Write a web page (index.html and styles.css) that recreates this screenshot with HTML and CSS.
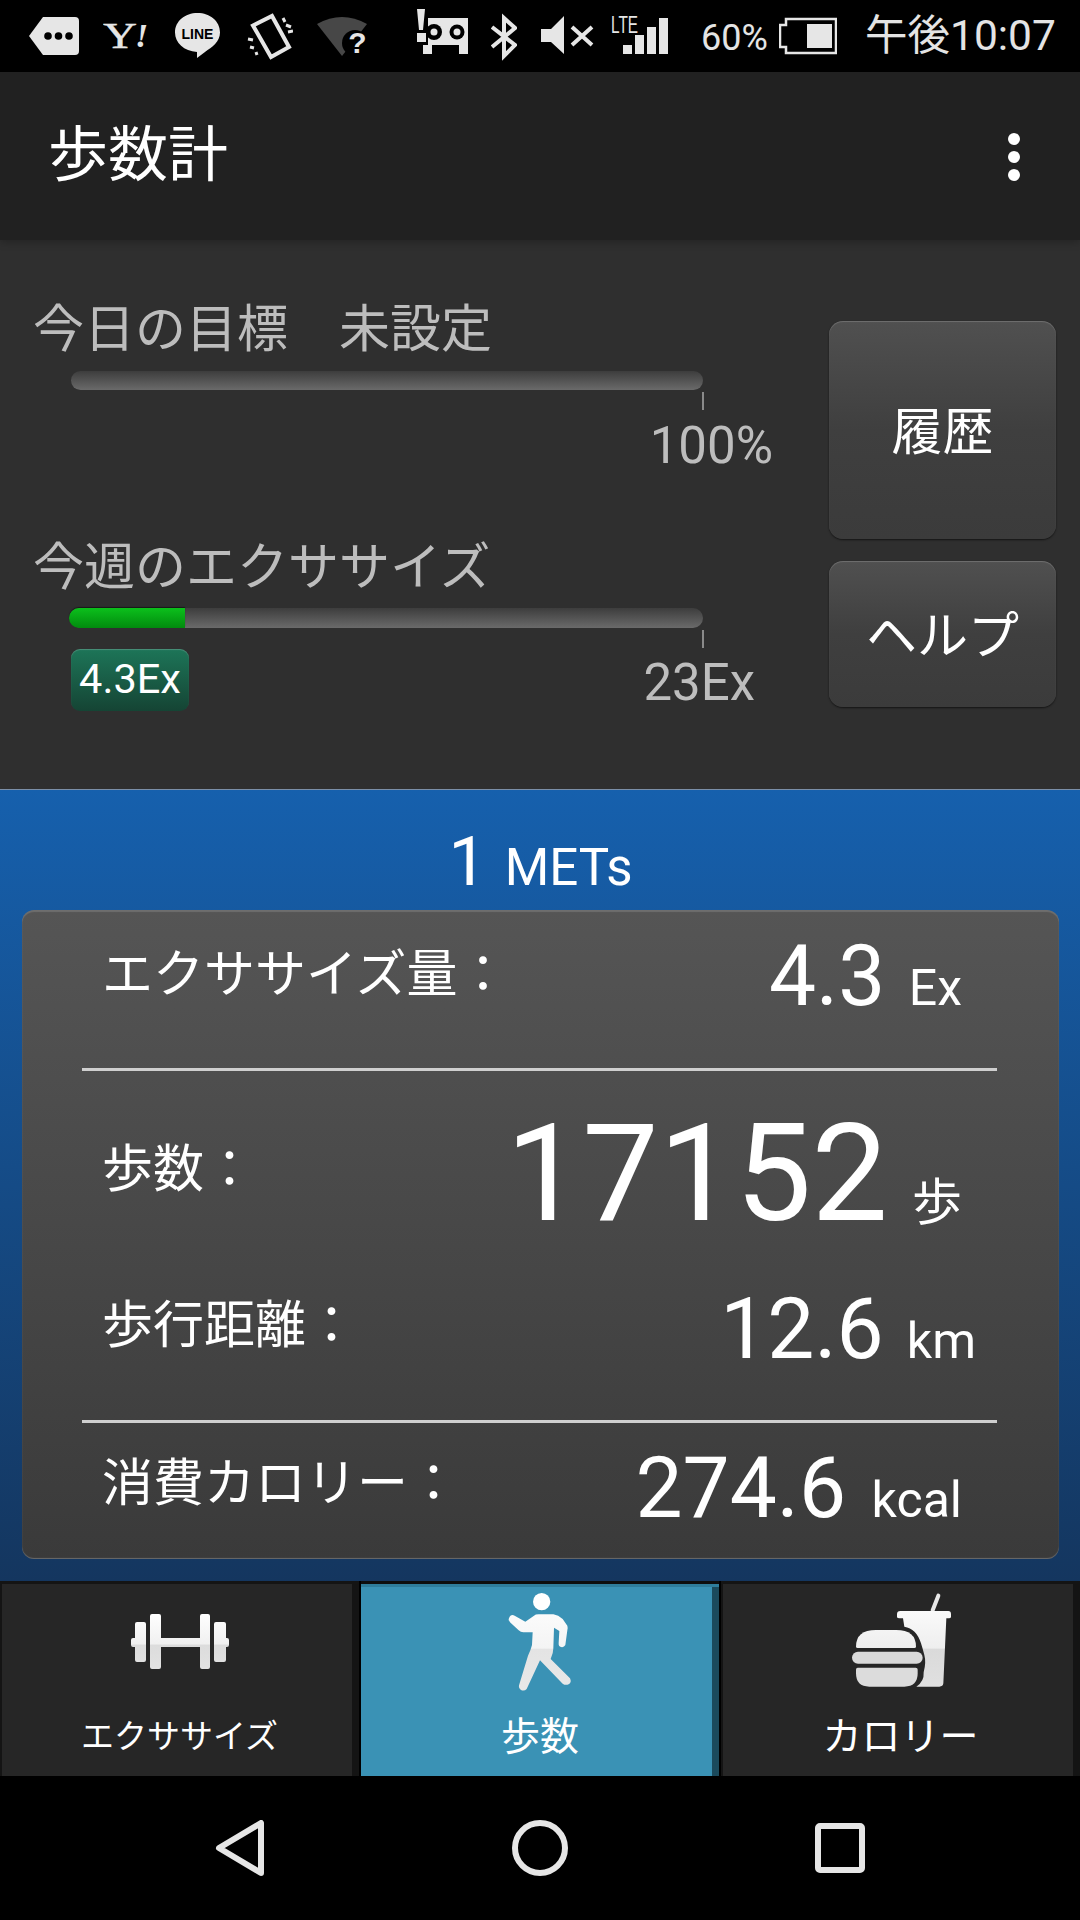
FILE: index.html
```html
<!DOCTYPE html>
<html lang="ja">
<head>
<meta charset="utf-8">
<title>歩数計</title>
<link rel="stylesheet" href="styles.css">
</head>
<body>
<svg class="defs" width="0" height="0" aria-hidden="true">
  <defs>
    <linearGradient id="gloss" x1="0" y1="0" x2="0" y2="1">
      <stop offset="0" stop-color="#ffffff"/>
      <stop offset="0.55" stop-color="#f0f0f0"/>
      <stop offset="0.56" stop-color="#dcdcdc"/>
      <stop offset="1" stop-color="#e2e2e2"/>
    </linearGradient>
    <linearGradient id="glossPage" gradientUnits="userSpaceOnUse" x1="0" y1="30" x2="0" y2="305">
      <stop offset="0" stop-color="#ffffff"/>
      <stop offset="0.58" stop-color="#eeeeee"/>
      <stop offset="0.59" stop-color="#dadada"/>
      <stop offset="1" stop-color="#e0e0e0"/>
    </linearGradient>
    <linearGradient id="glossPerson" gradientUnits="userSpaceOnUse" x1="0" y1="30" x2="0" y2="315">
      <stop offset="0" stop-color="#ffffff"/>
      <stop offset="0.56" stop-color="#f4f4f4"/>
      <stop offset="0.57" stop-color="#e4e4e4"/>
      <stop offset="1" stop-color="#e8e8e8"/>
    </linearGradient>
  </defs>
</svg>
<div class="phone">
  <header class="status">
    <svg class="ic" width="50" height="72" viewBox="29 0 50 72"><path class="f" d="M43 17H75Q79 17 79 21V51Q79 55 75 55H43L29 36Z"/><circle cx="48" cy="36" r="3.8"/><circle cx="58.500" cy="36" r="3.800"/><circle cx="69" cy="36" r="3.800"/></svg>
    <svg class="ic m24" width="46" height="72" viewBox="103 0 46 72"><text class="ya" x="103" y="48" textLength="34" lengthAdjust="spacingAndGlyphs">Y</text><text class="yb" x="135" y="47">!</text></svg>
    <svg class="ic m26" width="45" height="72" viewBox="175 0 45 72"><path class="f" d="M197.500 13C210 13 220 21 220 32.500C220 42 212 47 205 52L197 58L197 52C184 51 175 43 175 32.500C175 21 185 13 197.500 13Z"/><text class="li" x="197.500" y="39" text-anchor="middle">LINE</text></svg>
    <svg class="ic m27" width="46" height="72" viewBox="247 0 46 72"><path class="ln" d="M253 25.500L272 16L289 47L271 57Z"/><path class="ln2" d="M283 18L285 22M286 25L291 27M288 32L293 31M248 39L253 40M250 47L254 48M256 52L257 55"/></svg>
    <svg class="ic m24" width="50" height="72" viewBox="317 0 50 72"><path class="wf" d="M342 56L317 24Q342 10 367 24Z"/><circle cx="355" cy="43" r="13"/><text class="qm" x="357.500" y="53" text-anchor="middle">?</text></svg>
    <svg class="ic m50" width="51" height="72" viewBox="417 0 51 72"><path class="f" d="M417 9H425L423 30H419ZM417 33H426V42H417ZM428 18H468V54H459V45H432V54H423V45H428Z"/><circle cx="434" cy="32" r="8"/><circle class="f" cx="434" cy="32" r="3.500"/><circle cx="457" cy="32" r="7.500"/><circle class="f" cx="457" cy="32" r="3.500"/></svg>
    <svg class="ic m23" width="26" height="72" viewBox="491 0 26 72"><path class="ln" d="M492 27L515 45L504 56V18L515 28L492 47"/></svg>
    <svg class="ic m24" width="53" height="72" viewBox="541 0 53 72"><path class="f" d="M541 29H551L564 16V54L551 42H541Z"/><path class="ln" d="M572 27L592 45M592 27L572 45"/></svg>
    <svg class="ic m17" width="57" height="72" viewBox="611 0 57 72"><text class="lte" x="611" y="33" textLength="27" lengthAdjust="spacingAndGlyphs">LTE</text><path class="f" d="M623 45H632V54H623ZM635 35H644V54H635ZM647 27H656V54H647ZM659 18H668V54H659Z"/></svg>
    <span class="pct">60%</span>
    <svg class="ic m11" width="58" height="72" viewBox="779 0 58 72"><path class="bt" d="M786 19H836V53H786V47H780V25H786Z"/><rect class="f" x="807" y="24" width="25" height="24"/></svg>
    <span class="time">午後10:07</span>
  </header>

  <div class="appbar">
    <h1 class="title">歩数計</h1>
    <div class="menu"><i></i><i></i><i></i></div>
  </div>

  <section class="goals">
    <div class="goal-col">
      <div class="goal">
        <div class="goal-title">今日の目標　未設定</div>
        <div class="track"></div>
        <div class="tick"></div>
        <div class="goal-foot end-wide"><span class="goal-max">100%</span></div>
      </div>
      <div class="goal goal-second">
        <div class="goal-title">今週のエクササイズ</div>
        <div class="track"><div class="fill"></div></div>
        <div class="tick"></div>
        <div class="goal-foot"><span class="badge">4.3Ex</span><span class="goal-max max-low">23Ex</span></div>
      </div>
    </div>
    <div class="btn-col">
      <div class="btn btn-tall">履歴</div>
      <div class="btn btn-short">ヘルプ</div>
    </div>
  </section>

  <main class="main">
    <div class="mets"><span class="mets-n">1</span><span class="mets-u">METs</span></div>
    <div class="card">
      <div class="row r1">
        <div class="label">エクササイズ量：</div>
        <div class="val"><span class="num">4.3</span><span class="unit">Ex</span></div>
      </div>
      <div class="sep"></div>
      <div class="row r2">
        <div class="label">歩数：</div>
        <div class="val"><span class="num num-xl">17152</span><span class="unit">歩</span></div>
      </div>
      <div class="row r3">
        <div class="label">歩行距離：</div>
        <div class="val"><span class="num">12.6</span><span class="unit">km</span></div>
      </div>
      <div class="sep"></div>
      <div class="row r4">
        <div class="label">消費カロリー：</div>
        <div class="val"><span class="num">274.6</span><span class="unit">kcal</span></div>
      </div>
    </div>
  </main>

  <nav class="tabs">
    <div class="tab">
      <div class="tab-icon">
        <svg width="98" height="56" viewBox="131 1614 98 56"><path fill="url(#gloss)" d="M150 1616Q150 1614 152 1614H159Q161 1614 161 1616V1638H200V1616Q200 1614 202 1614H208Q210 1614 210 1616V1667Q210 1669 208 1669H202Q200 1669 200 1667V1647H161V1667Q161 1669 159 1669H152Q150 1669 150 1667ZM135 1624Q135 1622 137 1622H144Q146 1622 146 1624V1660Q146 1662 144 1662H137Q135 1662 135 1660V1647H133Q131 1647 131 1645V1640Q131 1638 133 1638H135ZM214 1624Q214 1622 216 1622H224Q226 1622 226 1624V1638H227Q229 1638 229 1640V1645Q229 1647 227 1647H226V1660Q226 1662 224 1662H216Q214 1662 214 1660Z"/></svg>
      </div>
      <div class="tab-label tab-label-sm">エクササイズ</div>
    </div>
    <div class="tab tab-active">
      <div class="tab-icon">
        <svg width="100" height="115" viewBox="0 0 300 345"><circle cx="155" cy="50" r="26" fill="#ffffff"/><path fill="url(#glossPerson)" d="M57 100Q62 86 74 92L106 110L132 92Q136 88 146 88H190Q205 90 218 102L232 122Q234 128 232 136L226 180Q222 188 213 186Q205 184 206 174L208 138L192 128L190 190Q190 205 182 222L240 280Q246 292 236 298Q226 302 218 296L150 226L110 312Q102 320 92 314Q84 308 88 298L114 212Q122 196 126 180L128 142L100 142Q92 142 86 136L60 112Q54 106 57 100Z"/></svg>
      </div>
      <div class="tab-label">歩数</div>
    </div>
    <div class="tab">
      <div class="tab-icon">
        <svg width="120" height="115" viewBox="0 0 360 345"><path fill="none" stroke="#e8e8e8" stroke-width="12" stroke-linecap="round" d="M275 76L292 32"/><path fill="url(#glossPage)" d="M168 88Q168 78 178 78H322Q330 78 330 88V96Q330 100 320 100H316L307 295Q306 305 295 305H226Q250 290 248 262Q256 232 250 210Q246 194 240 175Q226 130 190 125L186 100H176Q168 100 168 96Z"/><path fill="url(#glossPage)" d="M45 185Q45 135 105 135H165Q225 135 225 185Q225 189 220 189H50Q45 189 45 185Z"/><rect x="33" y="200" width="212" height="36" rx="18" fill="#dadada"/><path fill="#dcdcdc" d="M50 248H224Q230 248 230 254V265Q230 305 190 305H85Q45 305 45 265V254Q45 248 50 248Z"/></svg>
      </div>
      <div class="tab-label">カロリー</div>
    </div>
  </nav>

  <footer class="nav">
    <svg width="56" height="56" viewBox="0 0 56 56"><path class="nv" d="M7 28L49 3V53Z"/></svg>
    <svg width="56" height="56" viewBox="0 0 56 56"><circle class="nv" cx="28" cy="28" r="25"/></svg>
    <svg width="56" height="56" viewBox="0 0 56 56"><rect class="nv" x="6" y="6" width="44" height="44" rx="2"/></svg>
  </footer>
</div>
</body>
</html>
```

FILE: styles.css
```css
* { box-sizing: border-box; }
html, body { margin: 0; padding: 0; background: #000; }
body { width: 1080px; height: 1920px; overflow: hidden; font-family: Roboto, "Noto Sans CJK JP", sans-serif; }
.defs { position: absolute; }
.phone { width: 1080px; height: 1920px; display: flex; flex-direction: column; }

/* status bar */
.status { height: 72px; background: #000; display: flex; align-items: center; padding-left: 29px; color: #e4e4e4; flex: none; }
.ic { display: block; flex: none; }
.m11 { margin-left: 11px; }
.m17 { margin-left: 17px; }
.m23 { margin-left: 23px; }
.m24 { margin-left: 24px; }
.m26 { margin-left: 26px; }
.m27 { margin-left: 27px; }
.m50 { margin-left: 50px; }
.f { fill: #e6e6e6; }
.ln { fill: none; stroke: #e6e6e6; stroke-width: 4; }
.ln2 { fill: none; stroke: #e6e6e6; stroke-width: 3; }
.wf { fill: #474747; }
.bt { fill: none; stroke: #e6e6e6; stroke-width: 2.500; }
.ya { font-family: "Liberation Serif", serif; font-weight: 400; font-size: 36px; fill: #e6e6e6; stroke: #e6e6e6; stroke-width: .4; }
.yb { font-family: "Liberation Serif", serif; font-weight: 700; font-style: italic; font-size: 34px; fill: #e6e6e6; }
.li { font-family: "Liberation Sans", sans-serif; font-weight: 700; font-size: 14px; fill: #000; }
.qm { font-family: "Liberation Sans", sans-serif; font-weight: 700; font-size: 30px; fill: #e6e6e6; }
.lte { font-family: "Liberation Sans", sans-serif; font-size: 24px; fill: #e6e6e6; }
.pct { margin-left: 33px; font-size: 36px; line-height: 72px; padding-top: 3px; width: 67px; flex: none; }
.time { margin-left: 28px; font-size: 42.500px; line-height: 72px; white-space: nowrap; flex: none; }

/* app bar */
.appbar { height: 168px; background: #212121; display: flex; align-items: center; justify-content: space-between; padding: 0 60px 0 48px; flex: none; box-shadow: 0 2px 8px rgba(0,0,0,.25); position: relative; z-index: 1; }
.title { margin: 0; font-size: 60px; font-weight: 400; color: #fff; line-height: 1; }
.menu { display: flex; flex-direction: column; gap: 6px; margin-top: 1px; }
.menu i { display: block; width: 12px; height: 12px; border-radius: 50%; background: #fff; }

/* goals */
.goals { height: 549px; background: #2f2f2f; display: flex; padding: 60px 24px 0 35px; flex: none; }
.goal-col { width: 794px; flex: none; }
.goal-second { margin-top: 66px; }
.goal-title { font-size: 51px; line-height: 60px; color: #bdbdbd; white-space: nowrap; margin-left: -2px; }
.track { margin: 11px 0 0 36px; width: 632px; height: 19px; border-radius: 10px; background: linear-gradient(#3d3d3d, #6a6a6a); }
.goal-second .track { margin-top: 10px; height: 20px; }
.fill { width: 116px; height: 20px; margin-left: -2px; border-radius: 10px 0 0 10px; background: linear-gradient(#0cc01c, #028a0e); box-shadow: 0 -1px 1px rgba(0,0,0,.5); }
.tick { width: 2px; height: 18px; margin: 2px 0 0 667px; background: #8a8a8a; }
.goal-foot { display: flex; justify-content: space-between; align-items: flex-start; margin: 1px 0 0 36px; width: 684px; height: 62px; }
.end-wide { justify-content: flex-end; width: 702px; padding-top: 10px; height: 61px; }
.goal-max { font-size: 51px; line-height: 50px; color: #bdbdbd; }
.max-low { margin-top: 9px; }
.badge { width: 118px; height: 62px; border-radius: 9px; background: linear-gradient(#1d7558, #154434); color: #fff; font-size: 41.500px; line-height: 60px; text-align: center; box-shadow: inset 0 1px 1px rgba(255,255,255,.2); }
.btn-col { display: flex; flex-direction: column; gap: 22px; padding-top: 21px; width: 227px; }
.btn { border-radius: 14px; background: linear-gradient(#505050, #3f3f3f 50%, #3b3b3b); box-shadow: inset 0 1px 1px rgba(255,255,255,.18), 0 1px 2px rgba(0,0,0,.6); color: #fff; font-size: 51px; display: flex; align-items: center; justify-content: center; line-height: 1; padding-top: 4px; }
.btn-tall { height: 218px; }
.btn-short { height: 146px; }

/* main */
.main { height: 792px; flex: none; border-top: 1px solid #7b8fa8; background: linear-gradient(#1660ad, #14365f); padding: 0 21px 0 22px; display: flex; flex-direction: column; }
.mets { height: 120px; flex: none; display: flex; justify-content: center; align-items: baseline; gap: 18px; color: #fff; padding-top: 32px; }
.mets-n { font-size: 68px; line-height: 80px; }
.mets-u { font-size: 51px; line-height: 80px; }
.card { height: 649px; flex: none; border-radius: 12px; background: linear-gradient(#555555, #3a3a3a); box-shadow: inset 0 2px 1px rgba(255,255,255,.15), inset 0 -1px 1px rgba(255,255,255,.25); display: flex; flex-direction: column; color: #fff; }
.sep { height: 3px; margin: 0 62px 0 60px; background: #cfcfcf; flex: none; }
.row { display: flex; justify-content: space-between; align-items: flex-start; padding: 0 97px 0 80px; flex: none; }
.label { font-size: 51px; line-height: 60px; white-space: nowrap; }
.val { display: flex; align-items: baseline; gap: 23px; }
.num { font-size: 86px; line-height: 100px; transform: scaleX(.975); transform-origin: right center; }
.num-xl { font-size: 136px; line-height: 140px; transform: none; }
.unit { font-size: 50px; line-height: 60px; }
.r1 { height: 158px; }
.r1 .label { margin-top: 35px; }
.r1 .val { margin-top: 16px; }
.r2 { height: 183px; }
.r2 .label { margin-top: 69px; }
.r2 .val { margin-top: 33px; gap: 24px; }
.r3 { height: 166px; padding-right: 83px; }
.r3 .label { margin-top: 42px; }
.r3 .val { margin-top: 25px; }
.r4 { height: 134px; }
.r4 .label { margin-top: 31px; }
.r4 .val { margin-top: 15px; gap: 26px; }

/* tabs */
.tabs { height: 195px; flex: none; background: #000; display: grid; grid-template-columns: 359px 358px 359px; gap: 2px; }
.tab { background: #262626; color: #fff; display: flex; flex-direction: column; align-items: center; box-shadow: inset 0 3px #141414, inset 2px 0 #141414, inset -7px 0 #141414; }
.tab-active { background: #3a92b5; box-shadow: inset 0 3px #0e0e0e, inset 0 6px #2f7d9b, inset -7px 0 #1b4a5c; }
.tab-icon { height: 122px; display: flex; align-items: center; justify-content: center; flex: none; }
.tab-icon svg { display: block; }
.tab-label { margin-top: 14px; font-size: 39px; line-height: 40px; white-space: nowrap; }
.tab-label-sm { font-size: 33px; }

/* nav */
.nav { height: 144px; flex: none; background: #000; display: flex; justify-content: center; align-items: center; gap: 244px; padding-top: 0; }
.nv { fill: none; stroke: #e6e6e6; stroke-width: 6; stroke-linejoin: round; }
```
